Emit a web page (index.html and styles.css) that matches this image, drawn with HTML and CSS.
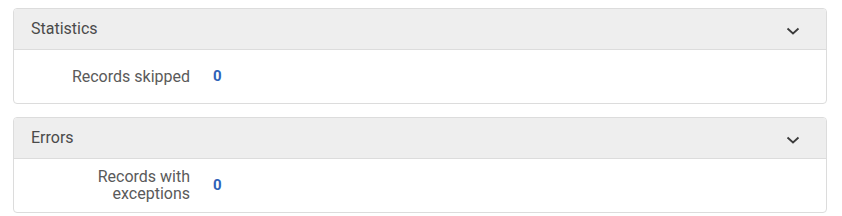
FILE: index.html
```html
<!DOCTYPE html>
<html lang="en">
<head>
    <meta charset="UTF-8">
    <title>Job report</title>
    <link rel="stylesheet" href="styles.css">
</head>
<body>
    <div class="panel">
        <div class="panel-header">
            <span class="panel-title">Statistics</span>
            <svg class="chevron" width="14" height="8" viewBox="0 0 14 8"><path d="M1.5 1.5l5.5 5 5.5-5" fill="none" stroke="#3b3b3b" stroke-width="1.8"/></svg>
        </div>
        <div class="panel-body">
            <div class="stat-row">
                <span class="stat-label">Records skipped</span>
                <span class="stat-value">0</span>
            </div>
        </div>
    </div>

    <div class="panel">
        <div class="panel-header">
            <span class="panel-title">Errors</span>
            <svg class="chevron" width="14" height="8" viewBox="0 0 14 8"><path d="M1.5 1.5l5.5 5 5.5-5" fill="none" stroke="#3b3b3b" stroke-width="1.8"/></svg>
        </div>
        <div class="panel-body">
            <div class="stat-row">
                <span class="stat-label">Records with exceptions</span>
                <span class="stat-value">0</span>
            </div>
        </div>
    </div>
</body>
</html>
```
FILE: styles.css
```css
* {
    margin: 0;
    padding: 0;
    box-sizing: border-box;
}

body {
    font-family: Roboto, "Liberation Sans", sans-serif;
    font-size: 16px;
    color: #333;
    background: #fff;
    padding: 8px 15px 0 13px;
}

.panel {
    border: 1px solid #dcdcdc;
    border-radius: 4px;
    margin-bottom: 13px;
    overflow: hidden;
}

.panel-header {
    background: #eeeeee;
    border-bottom: 1px solid #dcdcdc;
    height: 41px;
    display: flex;
    align-items: center;
    justify-content: space-between;
    padding: 0 26px 0 17px;
}

.panel-title {
    color: #4a4a4a;
    margin-top: -2px;
}

.chevron {
    display: block;
    margin-top: 4px;
}

.panel-body {
    padding: 9px 0 10px;
}

.stat-row {
    display: flex;
    align-items: center;
    min-height: 34px;
}

.stat-label {
    width: 176px;
    text-align: right;
    color: #5a5a5a;
    line-height: 17px;
    padding-left: 38px;
}

.stat-value {
    margin-left: 23px;
    color: #2f62b8;
    font-weight: bold;
    font-size: 15px;
}
```
